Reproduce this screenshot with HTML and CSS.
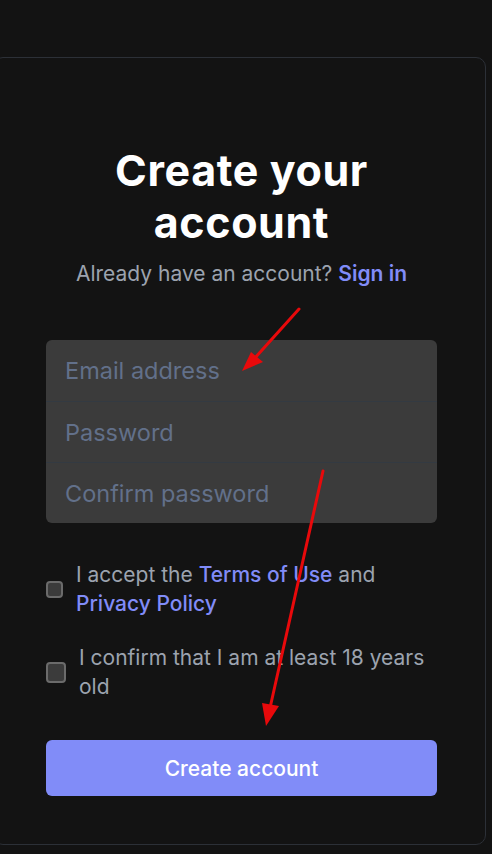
FILE: index.html
```html
<!DOCTYPE html>
<html lang="en">
  <head>
    <meta charset="utf-8">
    <title>Create your account</title>
    <link rel="stylesheet" href="styles.css">
  </head>
  <body>
    <div class="card">
      <h1>Create your account</h1>
      <p class="subtitle">Already have an account? <a href="#">Sign in</a></p>

      <div class="fields">
        <input type="email" placeholder="Email address">
        <input type="password" placeholder="Password">
        <input type="password" placeholder="Confirm password">
      </div>

      <label class="check">
        <input type="checkbox" class="box">
        <span>I accept the <a href="#">Terms of Use</a> and <a href="#">Privacy Policy</a></span>
      </label>
      <label class="check check-age">
        <input type="checkbox" class="box box-lg">
        <span>I confirm that I am at least 18 years old</span>
      </label>

      <button type="submit" class="submit">Create account</button>
    </div>

    <!-- annotation arrows drawn over the form -->
    <svg class="marks" width="492" height="854" viewBox="0 0 492 854">
      <line x1="299" y1="309" x2="254" y2="359" stroke="#e8090b" stroke-width="3" stroke-linecap="round"/>
      <polygon points="242,371 251,352 263,362" fill="#e8090b"/>
      <line x1="323" y1="471" x2="270" y2="708" stroke="#e8090b" stroke-width="3" stroke-linecap="round"/>
      <polygon points="266,726 262,703 279,706" fill="#e8090b"/>
    </svg>
  </body>
</html>
```

FILE: styles.css
```css
html {
  font-family: Inter, "Noto Sans", sans-serif;
  background: #131313;
}

body {
  margin: 0;
  padding-top: 57px;
  position: relative;
  overflow: hidden;
}

a {
  color: #818cf8;
  text-decoration: none;
  font-weight: 500;
}

.card {
  width: 493px;
  margin-left: -7px;
  box-sizing: border-box;
  padding: 86px 48px 48px 52px;
  border: 1px solid #2c3037;
  border-radius: 10px;
  background: #131313;
}

h1 {
  margin: 0;
  color: #fff;
  font-size: 43px;
  line-height: 52px;
  font-weight: 700;
  letter-spacing: 0.6px;
  text-align: center;
}

.subtitle {
  margin: 12px 0 0;
  color: #9ca3af;
  font-size: 21px;
  line-height: 28px;
  text-align: center;
}

.subtitle a {
  font-weight: 600;
}

.fields {
  margin-top: 52px;
  display: flex;
  flex-direction: column;
  background: #3b3b3b;
  border-radius: 6px;
  overflow: hidden;
}

.fields input {
  height: 61px;
  box-sizing: border-box;
  padding: 0 19px;
  border: 0;
  background: transparent;
  font-family: inherit;
  font-size: 23.5px;
  color: #e5e7eb;
  outline: none;
}

.fields input + input {
  border-top: 1px solid #333a42;
}

.fields input::placeholder {
  color: #62708a;
}

.check {
  display: flex;
  align-items: center;
  gap: 13px;
  margin-top: 37px;
  color: #9ca3af;
  font-size: 21px;
  line-height: 29px;
}

.check-age {
  margin-top: 25px;
}

.box {
  appearance: none;
  flex: none;
  width: 17px;
  height: 17px;
  margin: 0;
  border: 2px solid #6b6b6b;
  border-radius: 4px;
  background: #3b3b3b;
}

.box-lg {
  width: 20px;
  height: 21px;
  margin-top: 1px;
}

.submit {
  display: block;
  width: 100%;
  height: 56px;
  margin-top: 39px;
  border: 0;
  border-radius: 6px;
  background: #818cf8;
  color: #fff;
  font-family: inherit;
  font-size: 21px;
  font-weight: 500;
}

.marks {
  position: absolute;
  top: 0;
  left: 0;
  pointer-events: none;
}
```
